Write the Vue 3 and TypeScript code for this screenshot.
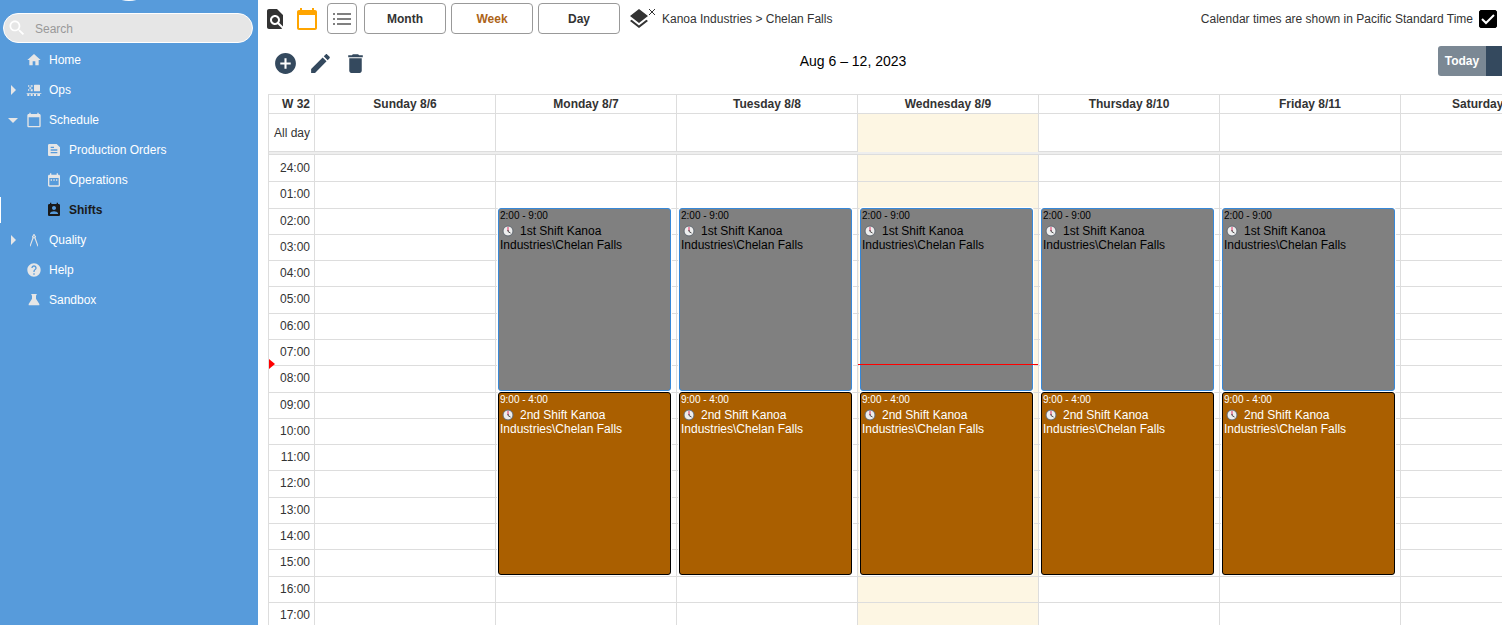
<script setup lang="ts">
import { ref } from 'vue'

interface NavItem {
  label: string
  icon: string
  caret?: 'right' | 'down'
  child?: boolean
  active?: boolean
}

interface Shift {
  time: string
  title: string
  kind: string
  start: number
  end: number
}

const icons: Record<string, string> = {
  home: 'M10 20v-6h4v6h5v-8h3L12 3 2 12h3v8z',
  ops: 'M13 4h7q1 0 1 1v8q0 1-1 1h-7q-1 0-1-1V5q0-1 1-1zM3 5h2v2H3zM7 5h3v2H7zM5 8h3v2H5zM3 11h2v2H3zM7 11h3v3H7zM1 17h22v1H1zM2 18h3v3H2zM7 18h3v3H7zM12 18h3v3h-3zM17 18h4v3h-4z',
  calendar: 'M20 3h-1V1h-2v2H7V1H5v2H4c-1.1 0-2 .9-2 2v16c0 1.1.9 2 2 2h16c1.1 0 2-.9 2-2V5c0-1.1-.9-2-2-2zm0 18H4V8h16v13z',
  orders: 'M16 3H5C3.9 3 3 3.9 3 5v14c0 1.1.9 2 2 2h14c1.1 0 2-.9 2-2V8l-5-5zM7 7h5v2H7V7zm10 10H7v-2h10v2zm0-4H7v-2h10v2z',
  operations: 'M9 11H7v2h2v-2zm4 0h-2v2h2v-2zm4 0h-2v2h2v-2zm2-7h-1V2h-2v2H8V2H6v2H5c-1.11 0-1.99.9-1.99 2L3 20c0 1.1.89 2 2 2h14c1.1 0 2-.9 2-2V6c0-1.1-.9-2-2-2zm0 16H5V9h14v11z',
  shifts: 'M19 3h-1V1h-2v2H8V1H6v2H5c-1.11 0-2 .9-2 2v14c0 1.1.89 2 2 2h14c1.1 0 2-.9 2-2V5c0-1.1-.9-2-2-2zm-7 3c1.66 0 3 1.34 3 3s-1.34 3-3 3-3-1.34-3-3 1.34-3 3-3zm6 12H6v-1c0-2 4-3.1 6-3.1s6 1.1 6 3.1v1z',
  quality: 'M11 3h2v2a2.500 2.500 0 0 1 1.300 3.800L18 19v3l-1-1L12.700 9.500h-1.400L7 21l-1 1v-3L9.700 8.800A2.500 2.500 0 0 1 11 5zM12 6a1 1 0 1 0 0 2 1 1 0 0 0 0-2z',
  help: 'M12 2C6.48 2 2 6.48 2 12s4.48 10 10 10 10-4.48 10-10S17.52 2 12 2zm1 17h-2v-2h2v2zm2.07-7.75l-.9.92C13.45 12.9 13 13.5 13 15h-2v-.5c0-1.1.45-2.1 1.17-2.83l1.24-1.26c.37-.36.59-.86.59-1.41 0-1.1-.9-2-2-2s-2 .9-2 2H8c0-2.21 1.79-4 4-4s4 1.79 4 4c0 .88-.36 1.68-.93 2.25z',
  sandbox: 'M8 3h8v2h-1v5l5 8v2H4v-2l5-8V5H8z',
  search: 'M15.5 14h-.79l-.28-.27C15.41 12.59 16 11.11 16 9.5 16 5.91 13.09 3 9.5 3S3 5.91 3 9.5 5.91 16 9.5 16c1.61 0 3.09-.59 4.23-1.57l.27.28v.79l5 4.99L20.49 19l-4.99-5zm-6 0C7.01 14 5 11.99 5 9.5S7.01 5 9.5 5 14 7.01 14 9.5 11.99 14 9.5 14z',
  find: 'M20 19.59V8l-6-6H6c-1.1 0-1.99.9-1.99 2L4 20c0 1.1.89 2 1.99 2H18c.45 0 .85-.15 1.19-.4l-4.43-4.43c-.8.52-1.74.83-2.76.83-2.76 0-5-2.24-5-5s2.24-5 5-5 5 2.24 5 5c0 1.02-.31 1.96-.83 2.75L20 19.59zM9 13c0 1.66 1.34 3 3 3s3-1.34 3-3-1.34-3-3-3-3 1.34-3 3z',
  list: 'M3 7h2v2H3zM3 12h2v2H3zM3 17h2v2H3zM7 7h14v2H7zM7 12h14v2H7zM7 17h14v2H7z',
  layers: 'M11.99 18.54l-7.37-5.73L3 14.07l9 7 9-7-1.63-1.27-7.38 5.74zM12 16l7.36-5.73L21 9l-9-7-9 7 1.63 1.27L12 16z',
  add: 'M12 2C6.48 2 2 6.48 2 12s4.48 10 10 10 10-4.48 10-10S17.52 2 12 2zm5 11h-4v4h-2v-4H7v-2h4V7h2v4h4v2z',
  edit: 'M3 17.25V21h3.75L17.81 9.94l-3.75-3.75L3 17.25zM20.71 7.04c.39-.39.39-1.02 0-1.41l-2.34-2.34c-.39-.39-1.02-.39-1.41 0l-1.83 1.83 3.75 3.75 1.83-1.83z',
  remove: 'M6 19c0 1.1.9 2 2 2h8c1.1 0 2-.9 2-2V7H6v12zM19 4h-3.5l-1-1h-5l-1 1H5v2h14V4z',
}

const nav: NavItem[] = [
  { label: 'Home', icon: 'home' },
  { label: 'Ops', icon: 'ops', caret: 'right' },
  { label: 'Schedule', icon: 'calendar', caret: 'down' },
  { label: 'Production Orders', icon: 'orders', child: true },
  { label: 'Operations', icon: 'operations', child: true },
  { label: 'Shifts', icon: 'shifts', child: true, active: true },
  { label: 'Quality', icon: 'quality', caret: 'right' },
  { label: 'Help', icon: 'help' },
  { label: 'Sandbox', icon: 'sandbox' },
]

const views = ['Month', 'Week', 'Day']
const view = ref('Week')
const query = ref('')
const showZone = ref(true)

const shifts: Shift[] = [
  { time: '2:00 - 9:00', title: '1st Shift Kanoa Industries\\Chelan Falls', kind: 'first', start: 2, end: 9 },
  { time: '9:00 - 4:00', title: '2nd Shift Kanoa Industries\\Chelan Falls', kind: 'second', start: 9, end: 16 },
]

const days = [
  { name: 'Sunday 8/6', today: false, shifts: [] as Shift[] },
  { name: 'Monday 8/7', today: false, shifts },
  { name: 'Tuesday 8/8', today: false, shifts },
  { name: 'Wednesday 8/9', today: true, shifts },
  { name: 'Thursday 8/10', today: false, shifts },
  { name: 'Friday 8/11', today: false, shifts },
  { name: 'Saturday 8/12', today: false, shifts: [] as Shift[] },
]

const hours = Array.from({ length: 24 }, (_, h) => `${String(h || 24).padStart(2, '0')}:00`)
const nowTop = `${(7.95 / 24) * 100}%`
</script>

<template>
  <div class="app">
    <aside class="sidebar">
      <div class="brand"><span class="logo"></span></div>
      <label class="search">
        <svg class="search-icon" viewBox="0 0 24 24" aria-hidden="true"><path :d="icons.search" /></svg>
        <input v-model="query" type="text" placeholder="Search" aria-label="Search" />
      </label>
      <nav>
        <a
          v-for="item in nav"
          :key="item.label"
          href="#"
          class="nav-item"
          :class="{ child: item.child, active: item.active }"
        >
          <span class="caret-box"><i v-if="item.caret" class="caret" :class="item.caret"></i></span>
          <svg class="nav-icon" viewBox="0 0 24 24" aria-hidden="true"><path fill-rule="evenodd" :d="icons[item.icon]" /></svg>
          <span>{{ item.label }}</span>
        </a>
      </nav>
    </aside>

    <main class="main">
      <header class="topbar">
        <button class="icon-btn find" aria-label="Find"><svg viewBox="0 0 24 24"><path :d="icons.find" /></svg></button>
        <button class="icon-btn cal" aria-label="Calendar"><svg viewBox="0 0 24 24"><path :d="icons.calendar" /></svg></button>
        <button class="view-btn list" aria-label="List"><svg viewBox="0 0 24 24"><path :d="icons.list" /></svg></button>
        <button
          v-for="v in views"
          :key="v"
          class="view-btn"
          :class="{ selected: v === view }"
          @click="view = v"
        >{{ v }}</button>
        <button class="icon-btn layers" aria-label="Clear location">
          <svg viewBox="0 0 24 24"><path :d="icons.layers" /></svg>
          <svg class="clear" viewBox="0 0 8 8"><path d="M1 1l6 6M7 1L1 7" /></svg>
        </button>
        <span class="crumbs">Kanoa Industries &gt; Chelan Falls</span>
        <label class="zone">
          <span>Calendar times are shown in Pacific Standard Time</span>
          <span class="check">
            <input v-model="showZone" type="checkbox" />
            <svg v-if="showZone" viewBox="0 0 18 18" aria-hidden="true"><path d="M3 9l4 4 8-8" /></svg>
          </span>
        </label>
      </header>

      <div class="calendar">
        <div class="toolbar">
          <div class="actions">
            <button class="icon-btn" aria-label="Add"><svg viewBox="0 0 24 24"><path :d="icons.add" /></svg></button>
            <button class="icon-btn" aria-label="Edit"><svg viewBox="0 0 24 24"><path :d="icons.edit" /></svg></button>
            <button class="icon-btn" aria-label="Delete"><svg viewBox="0 0 24 24"><path :d="icons.remove" /></svg></button>
          </div>
          <h1 class="title">Aug 6 – 12, 2023</h1>
          <div class="pager">
            <button class="today-btn" disabled>Today</button>
            <button aria-label="Previous"><svg viewBox="0 0 8 12"><path d="M7 1L2 6l5 5" /></svg></button>
            <button aria-label="Next"><svg viewBox="0 0 8 12"><path d="M1 1l5 5-5 5" /></svg></button>
          </div>
        </div>

        <div class="grid-frame">
          <div class="row head">
            <div class="axis">W 32</div>
            <div v-for="d in days" :key="d.name" class="cell">{{ d.name }}</div>
          </div>
          <div class="row all-day">
            <div class="axis">All day</div>
            <div v-for="d in days" :key="d.name" class="cell" :class="{ today: d.today }"></div>
          </div>
          <div class="divider"></div>
          <div class="row body">
            <div class="axis hours">
              <span v-for="h in hours" :key="h" class="hour">{{ h }}</span>
              <i class="now-arrow" :style="{ top: nowTop }"></i>
            </div>
            <div v-for="d in days" :key="d.name" class="cell day" :class="{ today: d.today }">
              <div class="lines"><span v-for="h in hours" :key="h" class="line"></span></div>
              <article
                v-for="s in d.shifts"
                :key="s.kind"
                class="event"
                :class="s.kind"
                :style="{ gridRow: `${s.start + 1} / ${s.end + 1}` }"
              >
                <div class="event-time">{{ s.time }}</div>
                <div class="event-title">
                  <svg class="clock" viewBox="0 0 12 12" aria-hidden="true">
                    <circle cx="6" cy="6" r="5" />
                    <path class="hand-red" d="M6 6V2" />
                    <path class="hand" d="M6 5v1.500L8.500 8" />
                  </svg>{{ s.title }}
                </div>
              </article>
              <i v-if="d.today" class="now-line" :style="{ top: nowTop }"></i>
            </div>
          </div>
        </div>
      </div>
    </main>
  </div>
</template>

<style>
body {
  margin: 0;
  background: #fff;
}
</style>

<style scoped>
.app {
  display: flex;
  height: 100vh;
  overflow: hidden;
  font-family: "Liberation Sans", Arial, sans-serif;
  font-size: 12px;
  color: #333;
}

.app *,
.app *::before {
  box-sizing: border-box;
}

button {
  font: inherit;
  cursor: pointer;
}

svg {
  display: block;
  fill: currentColor;
}

.sidebar {
  flex: 0 0 258px;
  background: #579bdb;
  color: #fff;
}

.brand {
  display: flex;
  flex-direction: column;
  align-items: center;
  justify-content: flex-end;
  height: 1px;
  margin-bottom: 12px;
}

.logo {
  flex: none;
  width: 56px;
  height: 56px;
  border-radius: 50%;
  background: #fff;
}

.search {
  display: flex;
  align-items: center;
  gap: 8px;
  height: 30px;
  margin: 0 5px 2px 3px;
  padding: 0 12px 0 3px;
  border: 1px solid #fff;
  border-radius: 15px;
  background: #e6e6e6;
}

.search-icon {
  flex: none;
  width: 20px;
  height: 20px;
  color: #fff;
}

.search input {
  flex: 1;
  min-width: 0;
  height: 24px;
  margin-top: 2px;
  padding: 0;
  border: 0;
  outline: 0;
  background: transparent;
  font: inherit;
  font-size: 12px;
  color: #333;
}

.search input::placeholder {
  color: #999;
}

.nav-item {
  display: flex;
  align-items: center;
  height: 30px;
  color: #fff;
  text-decoration: none;
}

.caret-box {
  display: flex;
  justify-content: center;
  width: 26px;
}

.child .caret-box {
  width: 46px;
}

.caret {
  border: 5px solid transparent;
}

.caret.right {
  border-left-color: #e6e6e6;
  border-right-width: 0;
}

.caret.down {
  border-top-color: #e6e6e6;
  border-bottom-width: 0;
}

.nav-icon {
  width: 16px;
  height: 16px;
  margin-right: 7px;
  color: #e6e6e6;
}

.nav-item.active {
  position: relative;
  font-weight: 700;
  color: #1a1a1a;
}

.active .nav-icon {
  color: #1a1a1a;
}

.active::before {
  content: "";
  position: absolute;
  left: 0;
  top: 2px;
  bottom: 2px;
  width: 1px;
  background: #fff;
}

.main {
  flex: 1;
  min-width: 0;
  overflow: hidden;
}

.topbar {
  display: flex;
  align-items: center;
  height: 38px;
  padding: 0 5px;
}

.icon-btn {
  display: flex;
  padding: 0;
  border: 0;
  background: none;
  color: inherit;
}

.topbar .icon-btn svg {
  width: 24px;
  height: 24px;
}

.find {
  margin-right: 8px;
}

.cal {
  margin-right: 8px;
  color: #ffa500;
}

.view-btn {
  width: 82px;
  height: 31px;
  margin: 0 5px 1px 0;
  padding: 0;
  border: 1px solid #999;
  border-radius: 4px;
  background: #fff;
  font-weight: 700;
  color: #333;
}

.view-btn.list {
  display: flex;
  justify-content: center;
  width: 30px;
  margin-right: 7px;
  padding-top: 2px;
  color: #808080;
}

.list svg {
  width: 24px;
  height: 24px;
}

.view-btn.selected {
  color: #ad6418;
}

.layers {
  margin: 0 6px 0 2px;
}

.topbar .layers .clear {
  width: 8px;
  height: 8px;
  margin-left: -3px;
  margin-top: 1px;
  fill: none;
  stroke: #333;
}

.zone {
  display: flex;
  align-items: center;
  gap: 6px;
  margin-left: auto;
}

.check {
  display: grid;
  width: 18px;
  height: 18px;
}

.check input,
.check svg {
  grid-area: 1 / 1;
  width: 18px;
  height: 18px;
  margin: 0;
}

.check input {
  appearance: none;
  border: 1px solid #000;
  border-radius: 2px;
}

.check input:checked {
  background: #000;
}

.check svg {
  z-index: 1;
  fill: none;
  stroke: #fff;
  stroke-width: 2;
  pointer-events: none;
}

/* The week is wider than the pane and runs past its right edge. */
.calendar {
  width: calc(100% + 79px);
  padding-left: 10px;
}

.toolbar {
  display: grid;
  grid-template-columns: 1fr 143px;
  align-items: center;
  height: 46px;
  margin-bottom: 10px;
}

.actions,
.title {
  grid-area: 1 / 1;
}

.actions {
  display: flex;
  gap: 10px;
  padding: 4px 0 0 5px;
  justify-self: start;
  z-index: 1;
  color: #34495e;
}

.actions svg {
  width: 25px;
  height: 25px;
}

.title {
  margin: 0;
  font-size: 14px;
  font-weight: 400;
  color: #000;
  text-align: center;
}

.pager {
  display: flex;
  height: 30px;
}

.pager button {
  display: flex;
  align-items: center;
  justify-content: center;
  flex: none;
  width: 48px;
  padding: 0;
  border: 0;
  background: #34495e;
  font-weight: 700;
  color: #fff;
}

.pager .today-btn {
  border-radius: 3px 0 0 3px;
  background: #7b8894;
}

.pager svg {
  width: 8px;
  height: 12px;
  fill: none;
  stroke: #fff;
  stroke-width: 2;
}

.grid-frame {
  border: 1px solid #ddd;
  border-right: 0;
}

.row {
  display: grid;
  grid-template-columns: 45px repeat(7, minmax(0, 1fr));
}

.axis {
  padding-right: 4px;
  text-align: right;
}

.cell {
  border-left: 1px solid #ddd;
}

.head {
  height: 19px;
  border-bottom: 1px solid #ddd;
  line-height: 18px;
  font-weight: 700;
}

.head .cell {
  text-align: center;
}

.all-day {
  height: 37px;
}

.all-day .axis {
  line-height: 38px;
}

.divider {
  height: 4px;
  border: solid #ddd;
  border-width: 1px 0;
  background: #eee;
}

.today {
  background: #fdf6e3;
}

.body {
  height: 631px;
}

.hours {
  position: relative;
  display: grid;
  grid-template-rows: repeat(24, minmax(0, 1fr));
  padding: 0;
}

.hour {
  padding-right: 4px;
  border-top: 1px solid #ddd;
  line-height: 25px;
}

.day {
  position: relative;
  display: grid;
  grid-template-rows: repeat(24, minmax(0, 1fr));
}

.lines {
  grid-area: 1 / 1 / 25 / 2;
  display: grid;
  grid-template-rows: repeat(24, minmax(0, 1fr));
}

.line {
  border-top: 1px solid #ddd;
}

.hour:first-child,
.line:first-child {
  border-top-color: transparent;
}

.event {
  grid-column: 1;
  margin: 0 5px 1px 2px;
  padding: 1px 1px 0;
  overflow: hidden;
  border: 1px solid #3788d8;
  border-radius: 3px;
  box-shadow: 0 0 0 1px #fff;
  background: #808080;
  color: #000;
}

.event.second {
  border-color: #000;
  background: #aa5f00;
  color: #fff;
}

.event-time {
  margin-bottom: 2px;
  font-size: 10px;
  line-height: 12px;
}

.event-title {
  line-height: 14px;
}

.clock {
  display: inline-block;
  width: 12px;
  height: 12px;
  margin: 0 6px 0 2px;
  vertical-align: -2px;
}

.clock circle {
  fill: #eee;
  stroke: #606870;
}

.clock path {
  fill: none;
  stroke: #444;
}

.clock .hand-red {
  stroke: #dd2e60;
}

.now-line {
  position: absolute;
  left: 0;
  right: 0;
  border-top: 1px solid #f00;
}

.now-arrow {
  position: absolute;
  left: 0;
  margin-top: -5px;
  border: solid transparent;
  border-width: 5px 0 5px 6px;
  border-left-color: #f00;
}
</style>
